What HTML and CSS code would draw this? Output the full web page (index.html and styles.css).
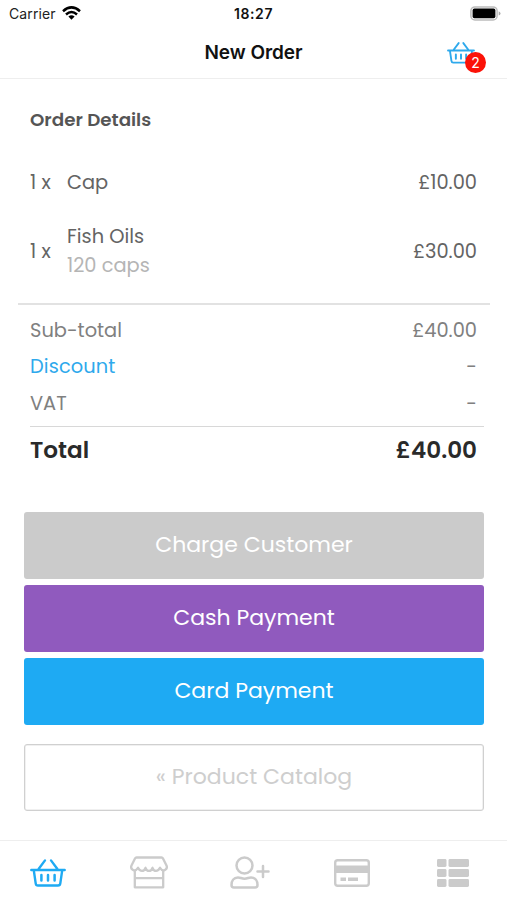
FILE: index.html
```html
<!DOCTYPE html>
<html lang="en">
<head>
<meta charset="utf-8">
<title>New Order</title>
<link rel="stylesheet" href="styles.css">
</head>
<body>
<svg width="0" height="0" class="defs">
  <symbol id="basket" viewBox="0 0 36 29">
    <g fill="none" stroke="currentColor" stroke-linecap="round" stroke-linejoin="round">
      <path stroke-width="2.4" d="M1.3 12H34.7M3.8 12.3L5.7 25.3Q6 27.5 8 27.5H28Q30 27.5 30.3 25.3L32.2 12.3M8.6 11L15 2.4M27.4 11L21 2.4"/>
      <path stroke-width="2.5" d="M11.4 17V22.5M18 17V22.5M24.6 17V22.5"/>
    </g>
  </symbol>
</svg>
<div class="screen">
  <div class="status">
    <div class="carrier">
      <span>Carrier</span>
      <svg width="19" height="14" viewBox="0 0 19 14"><g fill="none" stroke="#000" stroke-width="2.5"><path d="M1 5.2Q9.5 -2.4 18 5.2"/><path d="M4 8.5Q9.5 3.5 15 8.5"/></g><path d="M6.4 10.4Q9.5 8 12.6 10.4L9.5 13.7Z"/></svg>
    </div>
    <div class="clock">18:27</div>
    <div class="battery">
      <svg width="31" height="15" viewBox="0 0 31 15"><rect x=".9" y=".9" width="26.2" height="13" rx="4" fill="#fff" stroke="#bcbcbc" stroke-width="1.5"/><rect x="2.6" y="2.6" width="22.8" height="9.6" rx="1.8"/><path d="M28.7 5.3Q30.5 6 30.5 7.4T28.7 9.5Z" fill="#aaa"/></svg>
    </div>
  </div>
  <header class="header">
    <h1>New Order</h1>
    <div class="cart"><svg width="28" height="23"><use href="#basket"/></svg><span class="badge">2</span></div>
  </header>
  <main class="main">
    <h2>Order Details</h2>
    <div class="item cap"><span class="qty">1 x</span><div class="name">Cap</div><span class="price">£10.00</span></div>
    <div class="item oils"><span class="qty">1 x</span><div class="name">Fish Oils<small>120 caps</small></div><span class="price">£30.00</span></div>
    <div class="totals">
      <div class="row"><span>Sub-total</span><span>£40.00</span></div>
      <div class="row"><span class="discount">Discount</span><span>-</span></div>
      <div class="row"><span>VAT</span><span>-</span></div>
    </div>
    <div class="total"><span>Total</span><span>£40.00</span></div>
    <div class="actions">
      <button class="btn charge">Charge Customer</button>
      <button class="btn cash">Cash Payment</button>
      <button class="btn card">Card Payment</button>
      <button class="btn catalog">« Product Catalog</button>
    </div>
  </main>
  <nav class="tabs">
    <div class="tab active"><svg width="36" height="29"><use href="#basket"/></svg></div>
    <div class="tab"><svg width="38" height="33" viewBox="0 0 38 33"><g fill="none" stroke="currentColor" stroke-width="2.3" stroke-linecap="round" stroke-linejoin="round"><path d="M6.5 1.5H31.5Q32.5 1.5 33 2.5L36.5 9.5C38 13 33 17 30 11.8C28 16 24 16 22.5 11.8C21 16 17 16 15.5 11.8C14 16 10 16 8 11.8C5 17 0 13 1.5 9.5L5 2.5Q5.5 1.5 6.5 1.5Z"/><path d="M4.8 15V31.3H33.2V15M4.8 22.2H33.2"/></g></svg></div>
    <div class="tab"><svg width="40" height="33" viewBox="0 0 40 33"><g fill="none" stroke="currentColor" stroke-width="2.5" stroke-linecap="round" stroke-linejoin="round"><circle cx="14.5" cy="9.5" r="8"/><path d="M8 21.5C3.5 21.5 1.5 25 1.5 29Q1.5 31.5 4 31.5H25Q27.5 31.5 27.5 29C27.5 25 25.5 21.5 21 21.5C18.5 21.5 17.5 22.7 14.5 22.7S10.5 21.5 8 21.5ZM27.5 15.5H38.5M33 10V21"/></g></svg></div>
    <div class="tab"><svg width="36" height="28" viewBox="0 0 36 28"><rect x="1.2" y="1.2" width="33.6" height="25.6" rx="2.5" fill="none" stroke="currentColor" stroke-width="2.4"/><path fill="currentColor" d="M1 6.5H35V14H1ZM6.5 18.5H12V22H6.5ZM14 18.5H24V22H14Z"/></svg></div>
    <div class="tab"><svg width="32" height="28" viewBox="0 0 32 28" fill="currentColor"><rect width="9.5" height="8" rx="1.4"/><rect x="11.5" width="20.5" height="8" rx="1.4"/><rect y="10" width="9.5" height="8" rx="1.4"/><rect x="11.5" y="10" width="20.5" height="8" rx="1.4"/><rect y="20" width="9.5" height="8" rx="1.4"/><rect x="11.5" y="20" width="20.5" height="8" rx="1.4"/></svg></div>
  </nav>
</div>
</body>
</html>
```
FILE: styles.css
```css
* { box-sizing: border-box; }
body { margin: 0; background: #fff; font-family: Poppins, Inter, "Open Sans", sans-serif; color: #646464; }
.defs { display: block; position: absolute; }
.screen { height: 900px; display: flex; flex-direction: column; overflow: hidden; }
.status { height: 28px; display: grid; grid-template-columns: 1fr auto 1fr; align-items: center; padding: 0 6px 2px 9px; font-family: Inter, sans-serif; font-size: 14px; color: #222; }
.carrier { display: flex; align-items: center; gap: 6px; letter-spacing: .1px; }
.clock { font-weight: 600; color: #111; letter-spacing: .6px; margin-right: 3px; }
.battery { display: flex; justify-content: flex-end; }
.header { height: 51px; border-bottom: 1px solid #eee; display: grid; grid-template-columns: 1fr auto 1fr; align-items: center; font-family: Inter, sans-serif; }
h1 { grid-column: 2; margin: 0; font-size: 19px; font-weight: 600; line-height: 48px; color: #111; letter-spacing: -.05px; }
.cart { justify-self: end; position: relative; margin-right: 32px; color: #2ea9ec; height: 24px; display: flex; }
.badge { position: absolute; left: 18px; top: 11px; width: 21px; height: 21px; border-radius: 50%; background: #fb1208; color: #fff; font-size: 14px; line-height: 21px; text-align: center; }
.main { flex: 1; display: flex; flex-direction: column; padding: 26px 17px 0 18px; }
h2 { margin: 0 12px; font-size: 18.3px; line-height: 29px; font-weight: 600; color: #555; }
.item { display: grid; grid-template-columns: 37px 1fr auto; align-items: center; padding: 0 13px 0 12px; font-size: 19.4px; line-height: 29px; }
.cap { margin-top: 34px; }
.oils { margin-top: 25px; }
.qty { letter-spacing: .1px; }
.item small { display: block; font-size: inherit; color: #b5b5b5; }
.totals { border-top: 2px solid #e2e2e2; margin-top: 22.5px; padding: 8px 13px 0 12px; font-size: 19.4px; color: #808080; }
.row { display: flex; justify-content: space-between; line-height: 36.7px; }
.discount { color: #2ea9ec; letter-spacing: .1px; }
.total { display: flex; justify-content: space-between; margin: 3.5px 6px 0 12px; padding-right: 7px; border-top: 1px solid #d8d8d8; font-size: 23.1px; line-height: 46px; font-weight: 600; color: #2a2a2a; }
.actions { display: grid; gap: 6.2px; padding: 38.5px 6px 0 6px; }
.btn { width: 460px; height: 67px; border: 0; border-radius: 3px; padding: 0 0 2px; font: inherit; font-size: 22px; color: #fff; }
.charge { background: #cbcbcb; }
.cash { background: #905abe; }
.card { background: #1eaaf3; }
.catalog { margin-top: 12.6px; padding-bottom: 1px; background: #fff; border: 1px solid #d0d0d0; box-shadow: inset 0 0 0 .5px #e2e2e2; color: #cecece; }
.tabs { height: 60px; border-top: 1px solid #eee; display: grid; grid-template-columns: repeat(5, 101.2px); margin-left: -2.5px; color: #cbcbcb; }
.tab { display: flex; align-items: center; justify-content: center; height: 63px; }
.tab.active { color: #1eaaf3; }
```
